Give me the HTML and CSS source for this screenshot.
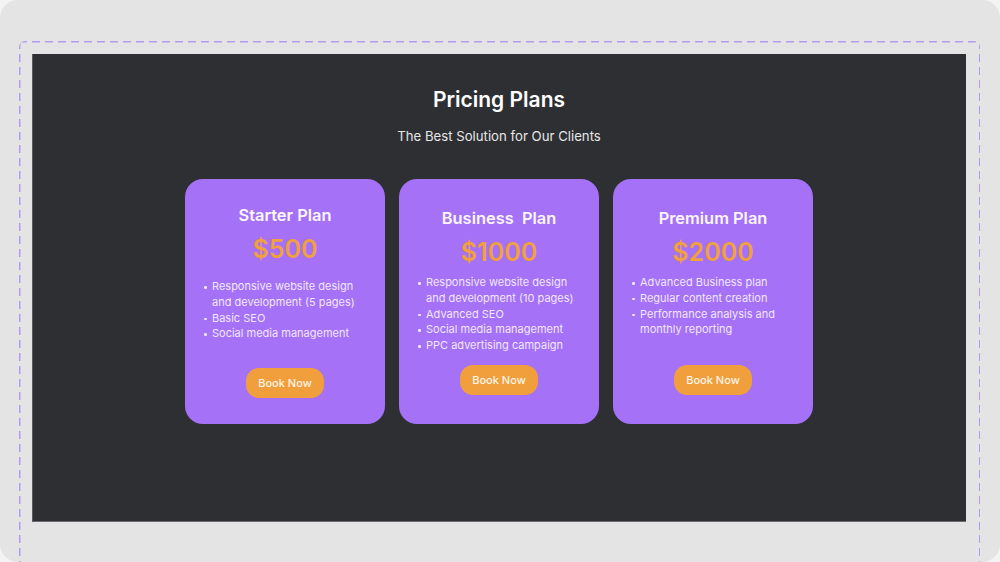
FILE: index.html
```html
<!DOCTYPE html>
<html lang="en">
<head>
<meta charset="utf-8">
<title>Pricing Plans</title>
<link rel="stylesheet" href="styles.css">
</head>
<body>
<div class="screen">
  <div class="frame">
    <section class="panel">
      <h1 class="title">Pricing Plans</h1>
      <p class="subtitle">The Best Solution for Our Clients</p>
      <div class="cards">
        <div class="card card-starter">
          <h2 class="card-title">Starter Plan</h2>
          <div class="price">$500</div>
          <ul class="features">
            <li>Responsive website design and development (5 pages)</li>
            <li>Basic SEO</li>
            <li>Social media management</li>
          </ul>
          <a class="btn" href="#">Book Now</a>
        </div>
        <div class="card">
          <h2 class="card-title">Business&nbsp; Plan</h2>
          <div class="price">$1000</div>
          <ul class="features">
            <li>Responsive website design and development (10 pages)</li>
            <li>Advanced SEO</li>
            <li>Social media management</li>
            <li>PPC advertising campaign</li>
          </ul>
          <a class="btn" href="#">Book Now</a>
        </div>
        <div class="card">
          <h2 class="card-title">Premium Plan</h2>
          <div class="price">$2000</div>
          <ul class="features">
            <li>Advanced Business plan</li>
            <li>Regular content creation</li>
            <li>Performance analysis and monthly reporting</li>
          </ul>
          <a class="btn" href="#">Book Now</a>
        </div>
      </div>
    </section>
  </div>
</div>
</body>
</html>
```
FILE: styles.css
```css
* { box-sizing: border-box; }
html, body { margin: 0; padding: 0; }
body {
  background: #f3f3f3;
  font-family: Inter, "Open Sans", sans-serif;
  width: 1000px;
  height: 562px;
  overflow: hidden;
}
.screen {
  height: 562px;
  background: #e4e4e4;
  border-radius: 18px;
  padding: 41px 20px 0 19px;
  overflow: hidden;
}
.frame {
  height: 620px;
  padding: 13px 14px 13px 13px;
  border-radius: 6px;
  background:
    repeating-linear-gradient(90deg, #b39bf1 0 8px, transparent 8px 13px) left top / 100% 1.5px no-repeat,
    repeating-linear-gradient(180deg, #b39bf1 0 8px, transparent 8px 13px) left top / 1.5px 100% no-repeat,
    repeating-linear-gradient(180deg, #b39bf1 0 8px, transparent 8px 13px) right top / 1.5px 100% no-repeat;
}
.panel {
  height: 468px;
  background: #2e2f33;
  box-shadow: inset 1px 0 0 #595a5d, inset 0 -1px 0 #6a6b6e;
  padding-top: 34px;
  text-align: center;
}
.title {
  margin: 0;
  color: #ffffff;
  font-size: 21px;
  line-height: 24px;
  font-weight: 600;
}
.subtitle {
  margin: 14px 0 0;
  color: #e6e6e6;
  font-size: 13.2px;
  line-height: 20px;
  font-weight: 400;
}
.cards {
  display: flex;
  justify-content: center;
  gap: 14px;
  margin-top: 33px;
}
.card {
  width: 200px;
  height: 245px;
  background: #a571f7;
  border-radius: 18px;
  display: flex;
  flex-direction: column;
  align-items: center;
  padding: 28px 19px 29px;
}
.card-title {
  margin: 0;
  color: #fbf6ff;
  font-size: 16.4px;
  line-height: 22px;
  font-weight: 600;
}
.price {
  margin-top: 8px;
  color: #f0a03c;
  font-size: 25px;
  line-height: 30px;
  font-weight: 600;
}
.features {
  list-style: none;
  margin: 8px 0 0;
  padding: 0;
  align-self: stretch;
  text-align: left;
}
.features li {
  position: relative;
  padding-left: 8px;
  color: #f1e7ff;
  font-size: 11px;
  line-height: 15.75px;
}
.features li::before {
  content: "";
  position: absolute;
  left: 0;
  top: 7px;
  width: 2.5px;
  height: 2.5px;
  border-radius: 50%;
  background: #f1e7ff;
}
.btn {
  margin-top: auto;
  display: block;
  width: 78px;
  height: 30px;
  line-height: 30px;
  border-radius: 13px;
  background: #f09f3c;
  color: #fff4e6;
  font-size: 11px;
  font-weight: 500;
  text-decoration: none;
  text-align: center;
}
.card-starter {
  padding-top: 25px;
  padding-bottom: 26px;
}
.card-starter .features { margin-top: 15px; }
```
